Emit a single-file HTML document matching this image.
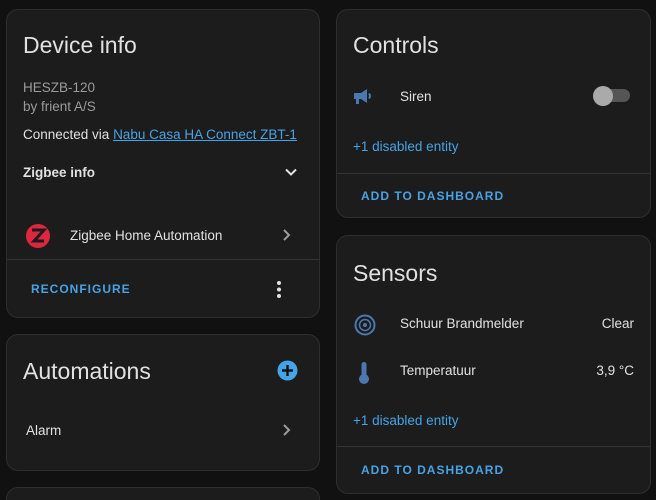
<!DOCTYPE html>
<html><head><style>
*{margin:0;padding:0;box-sizing:border-box}
html,body{width:656px;height:500px;overflow:hidden}
body{background:#111;font-family:"Liberation Sans",sans-serif;color:#e1e1e1;position:relative}
.card{position:absolute;background:#1c1c1c;border:1px solid #2e2e2e;border-radius:12px}
.a{position:absolute;white-space:nowrap}
.h{font-size:23px;color:#e1e1e1}
.t{font-size:13.5px;color:#e1e1e1}
.blue{color:#46a3e6}
.btn{font-size:12px;font-weight:bold;letter-spacing:1px;color:#46a3e6}
.hr{position:absolute;left:0;right:0;height:1px;background:#333}
</style></head><body>

<div class="card" style="left:6px;top:9px;width:314px;height:309px">
  <div class="a h" style="left:16px;top:22px">Device info</div>
  <div class="a t" style="left:16px;top:70px;color:#9b9b9b">HESZB-120</div>
  <div class="a t" style="left:16px;top:89px;color:#9b9b9b">by frient A/S</div>
  <div class="a t" style="left:16px;top:117px">Connected via <span class="blue" style="text-decoration:underline">Nabu Casa HA Connect ZBT-1</span></div>
  <div class="a t" style="left:16px;top:155px;font-weight:bold">Zigbee info</div>
  <svg class="a" style="left:277px;top:155px" width="14" height="14" viewBox="0 0 14 14"><path d="M2 4.5l5 5 5-5" stroke="#e1e1e1" stroke-width="2" fill="none"/></svg>
  <svg class="a" style="left:19px;top:214px" width="24" height="24" viewBox="0 0 24 24"><circle cx="12" cy="12" r="12" fill="#e0263f"/><path d="M6 6h12L8 17h10" stroke="#1c1c1c" stroke-width="3" fill="none"/></svg>
  <div class="a t" style="left:63px;top:218px">Zigbee Home Automation</div>
  <svg class="a" style="left:274px;top:218px" width="12" height="14" viewBox="0 0 12 14"><path d="M3 2l5 5-5 5" stroke="#9b9b9b" stroke-width="2" fill="none"/></svg>
  <div class="hr" style="top:249px"></div>
  <div class="a btn" style="left:24px;top:272px">RECONFIGURE</div>
  <svg class="a" style="left:268px;top:270px" width="8" height="20" viewBox="0 0 8 20"><circle cx="4" cy="3" r="2" fill="#e1e1e1"/><circle cx="4" cy="9.5" r="2" fill="#e1e1e1"/><circle cx="4" cy="16" r="2" fill="#e1e1e1"/></svg>
</div>

<div class="card" style="left:6px;top:334px;width:314px;height:137px">
  <div class="a h" style="left:16px;top:23px">Automations</div>
  <svg class="a" style="left:270px;top:25px" width="21" height="21" viewBox="0 0 21 21"><circle cx="10.5" cy="10.5" r="10" fill="#46a3e6"/><path d="M10.5 5v11M5 10.5h11" stroke="#111" stroke-width="2.4"/></svg>
  <div class="a t" style="left:19px;top:88px">Alarm</div>
  <svg class="a" style="left:274px;top:88px" width="12" height="14" viewBox="0 0 12 14"><path d="M3 2l5 5-5 5" stroke="#9b9b9b" stroke-width="2" fill="none"/></svg>
</div>

<div class="card" style="left:6px;top:487px;width:314px;height:14px;border-bottom:none;border-radius:12px 12px 0 0"></div>

<div class="card" style="left:336px;top:9px;width:315px;height:209px">
  <div class="a h" style="left:16px;top:22px">Controls</div>
  <svg class="a" style="left:16px;top:77px" width="22" height="20" viewBox="0 0 22 20"><path d="M1 6h7l6-4v14l-6-4H6v5H3v-5H1z" fill="#4c78b0"/><path d="M16 6.5q2 2.5 0 5" stroke="#4c78b0" stroke-width="2" fill="none"/></svg>
  <div class="a t" style="left:63px;top:79px">Siren</div>
  <div class="a" style="left:263px;top:79px;width:30px;height:13px;border-radius:7px;background:#555"></div>
  <div class="a" style="left:256px;top:76px;width:20px;height:20px;border-radius:50%;background:#aaa"></div>
  <div class="a t blue" style="left:16px;top:129px">+1 disabled entity</div>
  <div class="hr" style="top:163px"></div>
  <div class="a btn" style="left:24px;top:179px">ADD TO DASHBOARD</div>
</div>

<div class="card" style="left:336px;top:235px;width:315px;height:259px">
  <div class="a h" style="left:16px;top:24px">Sensors</div>
  <svg class="a" style="left:17px;top:78px" width="22" height="22" viewBox="0 0 22 22"><circle cx="11" cy="11" r="9.5" stroke="#4c78b0" stroke-width="2" fill="none"/><circle cx="11" cy="11" r="5.5" stroke="#4c78b0" stroke-width="1.5" fill="none"/><circle cx="11" cy="11" r="2" fill="#4c78b0"/></svg>
  <div class="a t" style="left:63px;top:80px">Schuur Brandmelder</div>
  <div class="a t" style="right:16px;top:80px">Clear</div>
  <svg class="a" style="left:20px;top:125px" width="14" height="24" viewBox="0 0 14 24"><rect x="4.5" y="1" width="5" height="15" rx="2.5" fill="#4c78b0"/><circle cx="7" cy="18" r="5" fill="#4c78b0"/></svg>
  <div class="a t" style="left:63px;top:127px">Temperatuur</div>
  <div class="a t" style="right:16px;top:127px">3,9 °C</div>
  <div class="a t blue" style="left:16px;top:177px">+1 disabled entity</div>
  <div class="hr" style="top:210px"></div>
  <div class="a btn" style="left:24px;top:227px">ADD TO DASHBOARD</div>
</div>
</body></html>
